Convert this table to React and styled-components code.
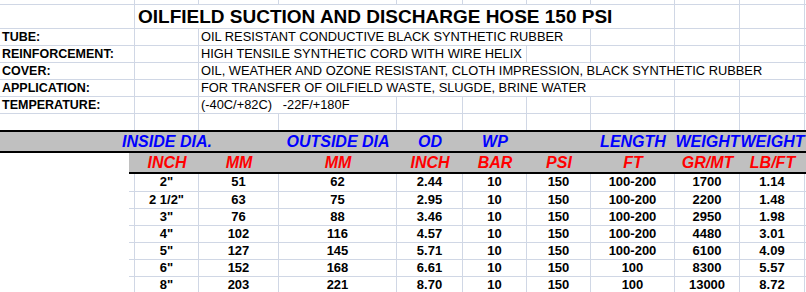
import React from 'react';
import styled, { createGlobalStyle } from 'styled-components';

// column widths in px, as read off the sheet
const COLS = [129, 6, 64, 80, 118, 66, 64, 64, 84, 65, 65, 1];
const LINE = '#d0d7e5';
const BAND = '#c0c0c0';

const GlobalStyle = createGlobalStyle`
  html, body {
    margin: 0;
    padding: 0;
    background: #fff;
  }
  body {
    font-family: "Liberation Sans", Arial, sans-serif;
    color: #000;
  }
`;

const Sheet = styled.div`
  width: 806px;
  height: 292px;
  overflow: hidden;
  background: #fff;
`;

const Row = styled.div`
  display: grid;
  grid-template-columns: ${COLS.map((w) => `${w}px`).join(' ')};
  height: ${(p) => p.$h}px;
  box-sizing: border-box;
  background: ${(p) => (p.$band ? BAND : 'transparent')};
  border-bottom: ${(p) => (p.$rule ? '2px solid #000' : 'none')};
`;

const Cell = styled.div`
  grid-column: ${(p) => p.$col} / span ${(p) => p.$span || 1};
  box-sizing: border-box;
  min-width: 0;
  border-right: ${(p) => (p.$open ? 'none' : `1px solid ${LINE}`)};
  border-bottom: ${(p) => (p.$flat ? 'none' : `1px solid ${LINE}`)};
  white-space: pre;
`;

const TitleCell = styled(Cell)`
  padding-left: 3px;
  font-size: 19px;
  font-weight: bold;
  line-height: 23px;
`;

const LabelCell = styled(Cell)`
  padding-left: 2px;
  font-size: 12.5px;
  font-weight: bold;
  line-height: 16px;
`;

const ValueCell = styled(Cell)`
  padding-left: 2px;
  font-size: 12.85px;
  line-height: 16px;
`;

const HeadCell = styled(Cell)`
  display: flex;
  justify-content: center;
  font-size: 16px;
  font-weight: bold;
  font-style: italic;
  line-height: 19px;
  color: ${(p) => p.$tone};
`;

const UnitCell = styled(HeadCell)`
  background: ${BAND};
  border-bottom: 2px solid #000;
`;

const DataCell = styled(Cell)`
  display: flex;
  justify-content: center;
  font-size: 13px;
  font-weight: bold;
  line-height: 16px;
`;

const specs = [
  { label: 'TUBE:', text: 'OIL RESISTANT CONDUCTIVE BLACK SYNTHETIC RUBBER', span: 5 },
  { label: 'REINFORCEMENT:', text: 'HIGH TENSILE SYNTHETIC CORD WITH WIRE HELIX', span: 4 },
  { label: 'COVER:', text: 'OIL, WEATHER AND OZONE RESISTANT, CLOTH IMPRESSION, BLACK SYNTHETIC RUBBER', span: 8 },
  { label: 'APPLICATION:', text: 'FOR TRANSFER OF OILFIELD WASTE, SLUGDE, BRINE WATER', span: 6 },
  { label: 'TEMPERATURE:', text: '(-40C/+82C)   -22F/+180F', span: 2 },
];

const groups = [
  [3, 'INSIDE DIA.'],
  [5, 'OUTSIDE DIA'],
  [6, 'OD'],
  [7, 'WP'],
  [9, 'LENGTH'],
  [10, 'WEIGHT'],
  [11, 'WEIGHT'],
];

const units = ['INCH', 'MM', 'MM', 'INCH', 'BAR', 'PSI', 'FT', 'GR/MT', 'LB/FT'];

const sizes = [
  ['2"', '51', '62', '2.44', '10', '150', '100-200', '1700', '1.14'],
  ['2 1/2"', '63', '75', '2.95', '10', '150', '100-200', '2200', '1.48'],
  ['3"', '76', '88', '3.46', '10', '150', '100-200', '2950', '1.98'],
  ['4"', '102', '116', '4.57', '10', '150', '100-200', '4480', '3.01'],
  ['5"', '127', '145', '5.71', '10', '150', '100-200', '6100', '4.09'],
  ['6"', '152', '168', '6.61', '10', '150', '100', '8300', '5.57'],
  ['8"', '203', '221', '8.70', '10', '150', '100', '13000', '8.72'],
];

// empty grid cells from column `from` up to the last column
const blanks = (from, flat) => {
  const out = [];
  for (let c = from; c <= COLS.length; c++) {
    out.push(<Cell key={c} $col={c} $open={c === COLS.length} $flat={flat} />);
  }
  return out;
};

export default function App() {
  return (
    <>
      <GlobalStyle />
      <Sheet>
        <Row $h={5}>
          <Cell $col={1} $span={2} />
          {blanks(3)}
        </Row>
        <Row $h={24}>
          <Cell $col={1} $span={2} />
          <TitleCell $col={3} $span={7}>OILFIELD SUCTION AND DISCHARGE HOSE 150 PSI</TitleCell>
          {blanks(10)}
        </Row>
        {specs.map((s) => (
          <Row $h={17} key={s.label}>
            <LabelCell $col={1} $span={2}>{s.label}</LabelCell>
            <Cell $col={3} />
            <ValueCell $col={4} $span={s.span}>{s.text}</ValueCell>
            {blanks(4 + s.span)}
          </Row>
        ))}
        <Row $h={18} $rule>
          <Cell $col={1} $span={2} $flat />
          {blanks(3, true)}
        </Row>
        <Row $h={21} $band $rule>
          {groups.map(([col, text]) => (
            <HeadCell key={col} $col={col} $open $flat $tone="#0000ff">{text}</HeadCell>
          ))}
        </Row>
        <Row $h={21}>
          <Cell $col={1} $open $flat />
          <UnitCell $col={2} $open $tone="#ff0000" />
          {units.map((u, i) => (
            <UnitCell key={i} $col={i + 3} $open $tone="#ff0000">{u}</UnitCell>
          ))}
          <UnitCell $col={12} $open $tone="#ff0000" />
        </Row>
        {sizes.map((r, n) => (
          <Row $h={n === 0 ? 18 : 17} key={r[0]}>
            <Cell $col={1} $open $flat />
            <Cell $col={2} />
            {r.map((v, i) => (
              <DataCell key={i} $col={i + 3}>{v}</DataCell>
            ))}
            <Cell $col={12} $open />
          </Row>
        ))}
      </Sheet>
    </>
  );
}
